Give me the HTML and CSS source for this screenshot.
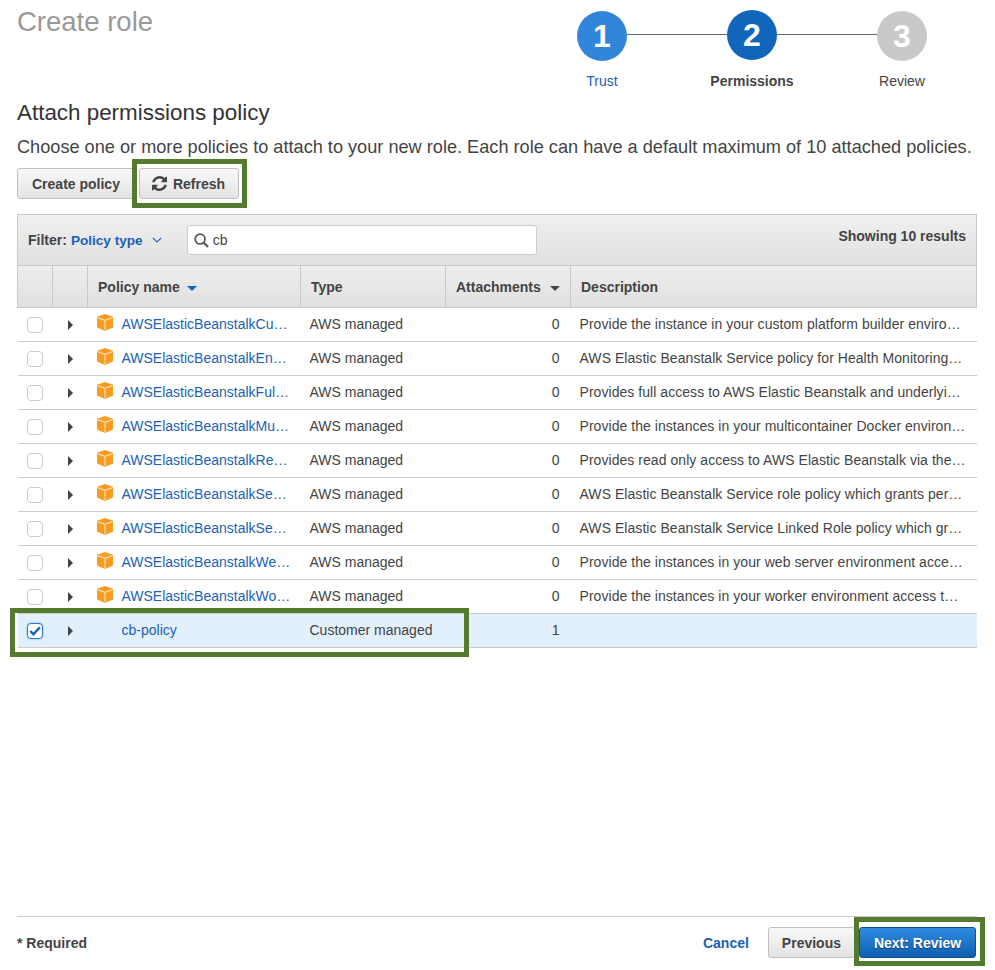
FILE: index.html
```html
<!DOCTYPE html>
<html lang="en">
<head>
    <meta charset="UTF-8">
    <title>Create role</title>
    <link rel="stylesheet" href="styles.css">
</head>
<body>
<svg width="0" height="0" class="defs">
    <symbol id="cube" viewBox="0 0 16 17">
        <path d="M8 0 L16 2.8 V13.5 L8 17 L0 13.5 V2.8 Z" fill="#f89c20"/>
        <path d="M0.5 3.6 L8 6.3 L15.5 3.6 M8 6.3 V16.6" fill="none" stroke="#fcdcae" stroke-width="1.2"/>
    </symbol>
    <symbol id="caret" viewBox="0 0 5 10">
        <path d="M0 0 L5 5 L0 10 Z" fill="#444"/>
    </symbol>
</svg>
<div class="page">
    <header class="top">
        <h1>Create role</h1>
        <ol class="steps">
            <li class="step done"><span class="dot">1</span><span class="step-label">Trust</span></li>
            <li class="step current"><span class="dot">2</span><span class="step-label">Permissions</span></li>
            <li class="step todo"><span class="dot">3</span><span class="step-label">Review</span></li>
        </ol>
    </header>

    <h2>Attach permissions policy</h2>
    <p class="intro">Choose one or more policies to attach to your new role. Each role can have a default maximum of 10 attached policies.</p>

    <div class="actions">
        <button class="btn" type="button">Create policy</button>
        <span class="marked">
            <button class="btn btn-refresh" type="button">
                <svg width="15" height="15" viewBox="0 0 1536 1536"><path fill="#444" d="M1511 928q0 5-1 7-64 268-268 434.5t-478 166.5q-146 0-282.5-55t-243.5-157l-129 129q-19 19-45 19t-45-19-19-45v-448q0-26 19-45t45-19h448q26 0 45 19t19 45-19 45l-137 137q71 66 161 102t187 36q134 0 250-65t186-179q11-17 53-117 8-23 30-23h192q13 0 22.5 9.5t9.5 22.5zm25-800v448q0 26-19 45t-45 19h-448q-26 0-45-19t-19-45 19-45l138-138q-148-137-349-137-134 0-250 65t-186 179q-11 17-53 117-8 23-30 23h-199q-13 0-22.5-9.5t-9.5-22.5v-7q65-268 270-434.5t480-166.5q146 0 284 55.5t245 156.5l130-129q19-19 45-19t45 19 19 45z"/></svg>
                Refresh
            </button>
            <span class="mark mark-refresh"></span>
        </span>
    </div>

    <section class="policies">
        <div class="filter-bar">
            <span class="filter-label">Filter:</span>
            <a class="filter-link">Policy type</a>
            <svg class="chevron" width="10" height="6" viewBox="0 0 10 6"><path d="M0.8 0.8 L5 5 L9.2 0.8" fill="none" stroke="#1b5fb8" stroke-width="1.1"/></svg>
            <div class="search">
                <svg width="15" height="15" viewBox="0 0 16 16"><circle cx="6.5" cy="6.5" r="5.2" fill="none" stroke="#555" stroke-width="1.9"/><path d="M10.2 10.2 L15 15" stroke="#555" stroke-width="2.2"/></svg>
                <span>cb</span>
            </div>
            <span class="count">Showing 10 results</span>
        </div>
        <table>
            <colgroup>
                <col class="c-check"><col class="c-arrow"><col class="c-name"><col class="c-type"><col class="c-att"><col>
            </colgroup>
            <thead>
                <tr>
                    <th></th>
                    <th></th>
                    <th>Policy name <i class="sort sort-blue"></i></th>
                    <th>Type</th>
                    <th>Attachments <i class="sort"></i></th>
                    <th>Description</th>
                </tr>
            </thead>
            <tbody>
                <tr>
                    <td><span class="check"></span></td>
                    <td class="arrow"><svg width="5" height="10"><use href="#caret"/></svg></td>
                    <td class="name"><svg width="16" height="17"><use href="#cube"/></svg><a>AWSElasticBeanstalkCu…</a></td>
                    <td>AWS managed</td>
                    <td class="num">0</td>
                    <td class="desc">Provide the instance in your custom platform builder enviro…</td>
                </tr>
                <tr>
                    <td><span class="check"></span></td>
                    <td class="arrow"><svg width="5" height="10"><use href="#caret"/></svg></td>
                    <td class="name"><svg width="16" height="17"><use href="#cube"/></svg><a>AWSElasticBeanstalkEn…</a></td>
                    <td>AWS managed</td>
                    <td class="num">0</td>
                    <td class="desc">AWS Elastic Beanstalk Service policy for Health Monitoring…</td>
                </tr>
                <tr>
                    <td><span class="check"></span></td>
                    <td class="arrow"><svg width="5" height="10"><use href="#caret"/></svg></td>
                    <td class="name"><svg width="16" height="17"><use href="#cube"/></svg><a>AWSElasticBeanstalkFul…</a></td>
                    <td>AWS managed</td>
                    <td class="num">0</td>
                    <td class="desc">Provides full access to AWS Elastic Beanstalk and underlyi…</td>
                </tr>
                <tr>
                    <td><span class="check"></span></td>
                    <td class="arrow"><svg width="5" height="10"><use href="#caret"/></svg></td>
                    <td class="name"><svg width="16" height="17"><use href="#cube"/></svg><a>AWSElasticBeanstalkMu…</a></td>
                    <td>AWS managed</td>
                    <td class="num">0</td>
                    <td class="desc">Provide the instances in your multicontainer Docker environ…</td>
                </tr>
                <tr>
                    <td><span class="check"></span></td>
                    <td class="arrow"><svg width="5" height="10"><use href="#caret"/></svg></td>
                    <td class="name"><svg width="16" height="17"><use href="#cube"/></svg><a>AWSElasticBeanstalkRe…</a></td>
                    <td>AWS managed</td>
                    <td class="num">0</td>
                    <td class="desc">Provides read only access to AWS Elastic Beanstalk via the…</td>
                </tr>
                <tr>
                    <td><span class="check"></span></td>
                    <td class="arrow"><svg width="5" height="10"><use href="#caret"/></svg></td>
                    <td class="name"><svg width="16" height="17"><use href="#cube"/></svg><a>AWSElasticBeanstalkSe…</a></td>
                    <td>AWS managed</td>
                    <td class="num">0</td>
                    <td class="desc">AWS Elastic Beanstalk Service role policy which grants per…</td>
                </tr>
                <tr>
                    <td><span class="check"></span></td>
                    <td class="arrow"><svg width="5" height="10"><use href="#caret"/></svg></td>
                    <td class="name"><svg width="16" height="17"><use href="#cube"/></svg><a>AWSElasticBeanstalkSe…</a></td>
                    <td>AWS managed</td>
                    <td class="num">0</td>
                    <td class="desc">AWS Elastic Beanstalk Service Linked Role policy which gr…</td>
                </tr>
                <tr>
                    <td><span class="check"></span></td>
                    <td class="arrow"><svg width="5" height="10"><use href="#caret"/></svg></td>
                    <td class="name"><svg width="16" height="17"><use href="#cube"/></svg><a>AWSElasticBeanstalkWe…</a></td>
                    <td>AWS managed</td>
                    <td class="num">0</td>
                    <td class="desc">Provide the instances in your web server environment acce…</td>
                </tr>
                <tr>
                    <td><span class="check"></span></td>
                    <td class="arrow"><svg width="5" height="10"><use href="#caret"/></svg></td>
                    <td class="name"><svg width="16" height="17"><use href="#cube"/></svg><a>AWSElasticBeanstalkWo…</a></td>
                    <td>AWS managed</td>
                    <td class="num">0</td>
                    <td class="desc">Provide the instances in your worker environment access t…</td>
                </tr>
                <tr class="selected">
                    <td><span class="check checked"><svg width="12" height="10" viewBox="0 0 12 10"><path d="M1.2 5 L4.4 8.2 L10.8 1.4" fill="none" stroke="#1166bb" stroke-width="2.4"/></svg></span></td>
                    <td class="arrow"><svg width="5" height="10"><use href="#caret"/></svg></td>
                    <td class="name no-icon"><a>cb-policy</a></td>
                    <td>Customer managed</td>
                    <td class="num">1</td>
                    <td></td>
                </tr>
            </tbody>
        </table>
        <span class="mark mark-row"></span>
    </section>

    <footer class="bottom">
        <span class="required">* Required</span>
        <a class="cancel">Cancel</a>
        <button class="btn btn-prev" type="button">Previous</button>
        <span class="marked marked-next">
            <button class="btn btn-primary" type="button">Next: Review</button>
            <span class="mark mark-next"></span>
        </span>
    </footer>
</div>
</body>
</html>
```

FILE: styles.css
```css
* {
    box-sizing: border-box;
}
body {
    margin: 0;
    font-family: "Liberation Sans", Arial, sans-serif;
    font-size: 14px;
    color: #444;
    background: #fff;
}
.defs {
    position: absolute;
}
.page {
    display: flex;
    flex-direction: column;
    height: 970px;
    padding: 0 18px 12px 17px;
}
a {
    color: #1b5fb8;
}

/* header + wizard steps */
.top {
    display: flex;
    justify-content: space-between;
    height: 98px;
}
h1 {
    margin: 5px 0 0;
    font-size: 27.5px;
    line-height: 34px;
    font-weight: normal;
    color: #999;
}
.steps {
    display: flex;
    width: 450px;
    margin: 0;
    padding: 10px 0 0;
    list-style: none;
}
.step {
    position: relative;
    display: flex;
    flex-direction: column;
    align-items: center;
    width: 150px;
}
.step + .step::before {
    content: "";
    position: absolute;
    top: 24px;
    left: -50px;
    width: 100px;
    height: 1px;
    background: #666;
}
.dot {
    width: 50px;
    height: 50px;
    border-radius: 50%;
    font-size: 32px;
    line-height: 50px;
    font-weight: bold;
    text-align: center;
    color: #fff;
}
.step-label {
    margin-top: 13px;
    line-height: 17px;
}
.done .dot {
    margin-top: 1px;
    background: #3186dc;
}
.done .step-label {
    margin-top: 12px;
    color: #1b5fb8;
}
.current .dot {
    background: #1166bb;
}
.current .step-label {
    font-weight: bold;
}
.todo .dot {
    margin-top: 1px;
    background: #c9c9c9;
}
.todo .step-label {
    margin-top: 12px;
}

h2 {
    margin: 0;
    font-size: 22.4px;
    line-height: 30px;
    font-weight: normal;
    color: #333;
}
.intro {
    margin: 7px 0 0;
    font-size: 18.17px;
    line-height: 24px;
    white-space: nowrap;
}

/* buttons */
.actions {
    display: flex;
    gap: 4px;
    margin-top: 9px;
}
.btn {
    height: 31px;
    padding: 0 14px;
    border: 1px solid #c0c0c0;
    border-radius: 3px;
    background: linear-gradient(#f9f9f9, #e3e3e3);
    font: bold 14px "Liberation Sans", Arial, sans-serif;
    color: #444;
    white-space: nowrap;
}
.btn-refresh {
    display: flex;
    align-items: center;
    gap: 6px;
    width: 100px;
    padding: 0 12px;
}
.btn-prev {
    padding: 0 13px;
}
.btn-primary {
    width: 117px;
    padding: 0;
    border-color: #0d4f96;
    background: linear-gradient(#2f8be0, #105fb0);
    color: #fff;
    text-shadow: 0 1px 1px rgba(0, 0, 0, 0.45);
}
.marked {
    position: relative;
    display: block;
}
.marked-next {
    margin-right: 1px;
}
.mark {
    position: absolute;
    border: 5px solid #537a2e;
    pointer-events: none;
}
.mark-refresh {
    top: -9px;
    right: -8px;
    bottom: -9px;
    left: -7px;
}
.mark-next {
    top: -10px;
    right: -9px;
    bottom: -8px;
    left: -5px;
}
.mark-row {
    top: 394px;
    left: -7px;
    width: 459px;
    height: 49px;
}

/* table */
.policies {
    position: relative;
    margin-top: 15px;
}
.filter-bar {
    display: flex;
    align-items: center;
    height: 52px;
    padding: 0 10px;
    border: 1px solid #c8c8c8;
    background: linear-gradient(#efefef, #e1e1e1);
}
.filter-label {
    font-weight: bold;
}
.filter-link {
    margin: 1px 0 0 4px;
    font-size: 13.6px;
    font-weight: bold;
}
.chevron {
    margin-left: 9px;
}
.search {
    display: flex;
    align-items: center;
    gap: 4px;
    width: 350px;
    height: 30px;
    margin-left: 25px;
    padding: 0 6px;
    border: 1px solid #ccc;
    border-radius: 3px;
    background: #fff;
}
.count {
    margin: -9px 0 0 auto;
    font-weight: bold;
}
table {
    width: 960px;
    table-layout: fixed;
    border-collapse: collapse;
}
.c-check, .c-arrow {
    width: 35px;
}
.c-name {
    width: 213px;
}
.c-type {
    width: 145px;
}
.c-att {
    width: 125px;
}
th {
    height: 41px;
    padding: 2px 10px 0;
    border: 1px solid #c8c8c8;
    border-top: 0;
    background: linear-gradient(#ededed, #e0e0e0);
    text-align: left;
}
.sort {
    display: inline-block;
    margin: 0 0 1px 5px;
    border-top: 5px solid #444;
    border-right: 5px solid transparent;
    border-left: 5px solid transparent;
}
.sort-blue {
    margin-left: 3px;
    border-top-color: #1166bb;
}
td {
    height: 34px;
    padding: 0 10px 0 9px;
    border-bottom: 1px solid #ccc;
    color: #444;
    white-space: nowrap;
}
.check {
    display: block;
    width: 16px;
    height: 16px;
    margin-top: 1px;
    border: 1px solid #ccc;
    border-radius: 4px;
    background: #fff;
}
.checked {
    display: flex;
    align-items: center;
    justify-content: center;
    border-color: #2a7ad0;
    box-shadow: 0 0 2px #6ab0f0;
}
.arrow {
    padding-left: 15px;
}
.arrow svg {
    display: block;
    margin-top: 2px;
}
.name svg {
    margin: -4px 9px -2px 0;
}
.no-icon a {
    margin-left: 25px;
}
.num {
    padding-right: 11px;
    text-align: right;
}
.desc {
    letter-spacing: 0.05px;
}
.selected td {
    background: #e2f0fc;
}

/* footer */
.bottom {
    display: flex;
    align-items: center;
    gap: 4px;
    margin-top: auto;
    padding-top: 10px;
    border-top: 1px solid #ccc;
}
.required {
    margin-right: auto;
    font-weight: bold;
}
.cancel {
    margin-right: 15px;
    font-weight: bold;
}
```
